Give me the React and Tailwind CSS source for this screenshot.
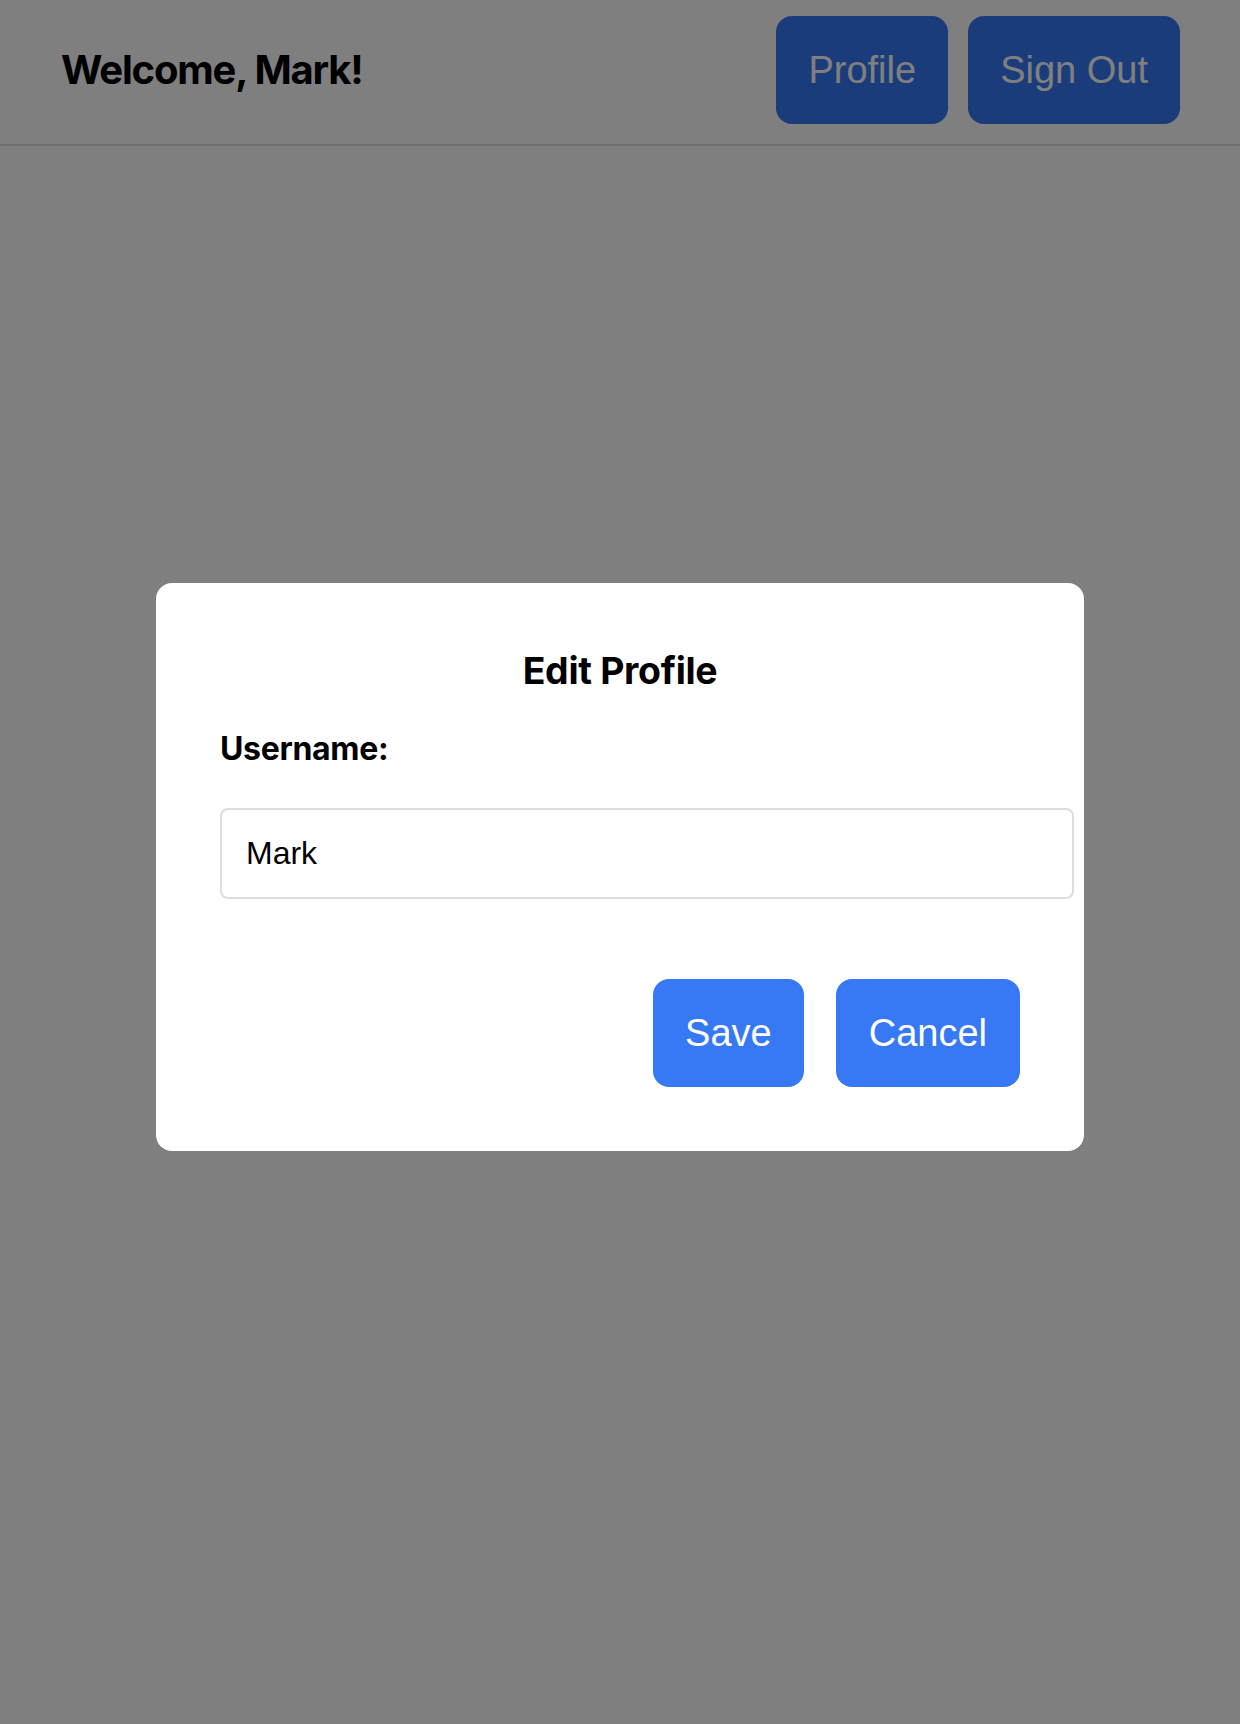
import { useState } from "react";

export default function App() {
  const [username, setUsername] = useState("Mark");

  return (
    <div className="relative min-h-[1724px] bg-white font-['Inter',sans-serif]">

      {/* Header */}
      <header className="flex items-center justify-between pt-4 pb-5 pl-[61px] pr-[60px] border-b-2 border-[#dddddd]">
        <h2 className="text-[40px] font-bold text-black tracking-[-1.2px]">
          Welcome, Mark!
        </h2>

        <div className="flex gap-5">
          <button className="px-8 py-8 text-[38px] leading-[44px] text-white bg-[#3779f5] rounded-2xl font-['Liberation_Sans',Arial,sans-serif]">
            Profile
          </button>
          <button className="px-8 py-8 text-[38px] leading-[44px] text-white bg-[#3779f5] rounded-2xl font-['Liberation_Sans',Arial,sans-serif]">
            Sign Out
          </button>
        </div>
      </header>

      {/* Overlay */}
      <div className="fixed inset-0 z-10 flex items-center justify-center pt-[10px] bg-black/50">

        {/* Modal */}
        <div className="w-[928px] bg-white rounded-2xl px-16 pt-16 pb-16">
          <h3 className="mt-[5px] mb-[40px] text-center text-[37.4px] leading-[38px] font-bold text-black tracking-[-0.3px]">
            Edit Profile
          </h3>

          <label className="block text-[32px] leading-[38px] font-bold text-black tracking-[-0.3px]">
            Username:
          </label>

          <input
            type="text"
            value={username}
            onChange={(e) => setUsername(e.target.value)}
            className="box-content w-full mt-[40px] pl-6 pr-[26px] py-6 border-2 border-[#dddddd] rounded-lg text-[32px] leading-[39px] text-black outline-none font-['Liberation_Sans',Arial,sans-serif]"
          />

          {/* Buttons */}
          <div className="flex justify-end gap-8 mt-20">
            <button className="px-8 py-8 text-[38px] leading-[44px] text-white bg-[#3779f5] rounded-2xl font-['Liberation_Sans',Arial,sans-serif]">
              Save
            </button>
            <button className="px-[33px] py-8 text-[38px] leading-[44px] text-white bg-[#3779f5] rounded-2xl font-['Liberation_Sans',Arial,sans-serif]">
              Cancel
            </button>
          </div>
        </div>
      </div>
    </div>
  );
}
